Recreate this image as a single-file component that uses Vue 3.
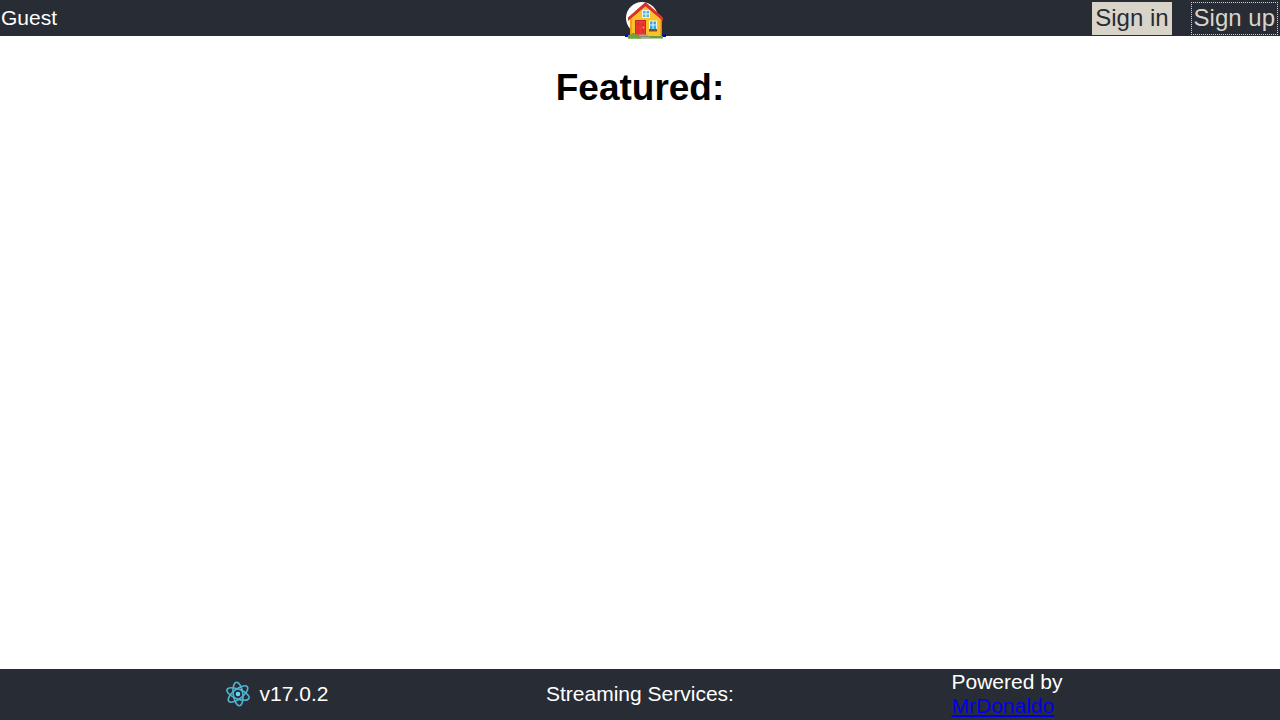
<script setup>
const services = 'Streaming Services:'
</script>

<template>
  <div class="page">
    <header class="bar">
      <span class="user">Guest</span>
      <a class="home" href="#" aria-label="Home">
        <svg class="house" viewBox="0 0 42 40" aria-hidden="true">
          <circle cx="17" cy="18" r="16" fill="#fff" />
          <path d="M0 34.500H41V37H0Z" fill="#00e" />
          <path d="M5 18L20.500 5L36.500 18V36H5Z" fill="#fcc02b" />
          <path d="M5 19H7V36H5ZM35 19H36.500V36H35Z" fill="#f2a01e" />
          <path d="M3 21V17.500L20.500 2L38 17.500V21L20.500 6.200Z" fill="#d32f2a" />
          <path d="M3.500 18L20.500 3L37.500 18" fill="none" stroke="#e03a2c" stroke-width="1" />
          <path d="M17 10H25V18H17Z" fill="#e8f5ef" />
          <path d="M18 11H20.500V13.500H18ZM21.500 11H24V13.500H21.500ZM18 14.500H20.500V17H18ZM21.500 14.500H24V17H21.500Z" fill="#4db6e5" />
          <path d="M10 20H21V35H10Z" fill="#c62828" />
          <path d="M11 21H20V35H11Z" fill="#e93a32" />
          <path d="M12 23H14.500V26H12ZM16.500 23H19V26H16.500ZM12 29H14.500V33H12ZM16.500 29H19V33H16.500Z" fill="#df302c" />
          <circle cx="18.500" cy="27.500" r="0.800" fill="#ffb93c" />
          <path d="M24 20.500H32V29.500H24Z" fill="#e8f5ef" />
          <path d="M25 21.500H27.500V24.500H25ZM28.500 21.500H31V24.500H28.500ZM25 25.500H27.500V29H25ZM28.500 25.500H31V29H28.500Z" fill="#38a9df" />
          <path d="M24 29H32V31.500H24Z" fill="#7d502b" />
          <path d="M3 36H38V38.500H3Z" fill="#689f38" />
          <path d="M14 34.500H23L25 38.500H13Z" fill="#a9a79c" />
          <path d="M13 36H25V37H13Z" fill="#858d83" />
          <path d="M3 38.500Q2 34 5.500 35Q8 31 11 34.500Q15 34 16 38.500Z" fill="#6ba539" />
        </svg>
      </a>
      <nav class="actions">
        <button class="action sign-in" type="button">Sign in</button>
        <button class="action sign-up" type="button">Sign up</button>
      </nav>
    </header>

    <main class="content">
      <h1>Featured:</h1>
    </main>

    <footer class="footer">
      <div class="version">
        <svg class="react" viewBox="0 0 26 26" aria-hidden="true">
          <g fill="none" stroke="#4fb4d0" stroke-width="1.600" transform="rotate(22 13 13)">
            <ellipse cx="13" cy="13" rx="11.800" ry="4.800" />
            <ellipse cx="13" cy="13" rx="11.800" ry="4.800" transform="rotate(60 13 13)" />
            <ellipse cx="13" cy="13" rx="11.800" ry="4.800" transform="rotate(120 13 13)" />
          </g>
          <circle cx="13" cy="13" r="2.300" fill="#61dafb" />
        </svg>
        <span>v17.0.2</span>
      </div>
      <div>{{ services }}</div>
      <div class="credit">Powered by<br /><a href="#">MrDonaldo</a></div>
    </footer>
  </div>
</template>

<style>
body {
  margin: 0;
  background: #fff;
}
</style>

<style scoped>
.page {
  display: flex;
  flex-direction: column;
  min-height: 100vh;
  font-family: "Liberation Sans", Arial, sans-serif;
  font-size: 21px;
  line-height: 24px;
}
.bar {
  display: grid;
  grid-template-columns: 1fr auto 1fr;
  align-items: center;
  height: 36px;
  background: #282c34;
  color: #fff;
}
.user {
  padding-left: 1px;
}
.home {
  align-self: start;
  width: 32px;
  height: 36px;
  margin-left: 2px;
}
.house {
  display: block;
  width: 42px;
  height: 40px;
}
.actions {
  display: flex;
  justify-content: flex-end;
  gap: 19px;
  padding-right: 2px;
}
.action {
  padding: 1px 3px 3px;
  border: 0;
  font: inherit;
  font-size: 24px;
  line-height: 29px;
}
.sign-in {
  background: #d9d4ca;
  color: #282c34;
}
.sign-up {
  padding: 0 2px 2px;
  border: 1px dotted #d9d4ca;
  background: transparent;
  color: #d9d4ca;
}
.content {
  flex: 1;
}
h1 {
  margin: 31px 0;
  font-size: 37px;
  line-height: 42px;
  text-align: center;
}
.footer {
  display: flex;
  justify-content: space-evenly;
  align-items: center;
  padding: 1px 0 2px 3px;
  background: #282c34;
  color: #fff;
}
.version {
  display: flex;
  align-items: center;
  gap: 5px;
}
.react {
  width: 34px;
  height: 26px;
}
.credit {
  white-space: nowrap;
}
.credit a {
  color: #00e;
}
</style>
